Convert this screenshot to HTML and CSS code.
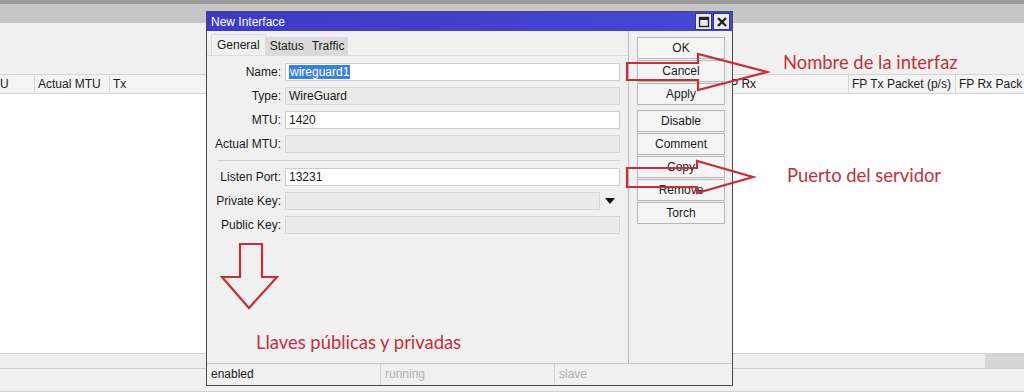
FILE: index.html
```html
<!DOCTYPE html>
<html lang="es">
<head>
  <meta charset="UTF-8" />
  <title>New Interface</title>
  <link rel="stylesheet" href="styles.css">
</head>
<body>
  <div class="app">
    <div class="topline"></div>
    <div class="toolbar"></div>
    <div class="filter"></div>
    <div class="thead">
      <div class="th c1">U</div>
      <div class="th c2">Actual MTU</div>
      <div class="th c3">Tx</div>
      <div class="th c4">FP Rx</div>
      <div class="th c5">FP Tx Packet (p/s)</div>
      <div class="th c6">FP Rx Pack</div>
    </div>
    <div class="tbody"></div>
    <div class="hscroll"><div class="thumb"></div></div>
    <div class="statusbar"></div>
  </div>

  <div class="dialog">
    <div class="titlebar">
      <span class="title">New Interface</span>
      <div class="winbtns">
        <span class="winbtn"><svg width="12" height="12" viewBox="0 0 12 12"><rect x="1.5" y="1.5" width="9" height="9" fill="none" stroke="#222" stroke-width="1.4"/><line x1="1.5" y1="3" x2="10.5" y2="3" stroke="#222" stroke-width="2"/></svg></span>
        <span class="winbtn"><svg width="12" height="12" viewBox="0 0 12 12"><path d="M2 2 L10 10 M10 2 L2 10" stroke="#222" stroke-width="2.4"/></svg></span>
      </div>
    </div>
    <div class="body">
      <div class="left">
        <div class="tabs">
          <span class="tab active">General</span>
          <span class="tab">Status</span>
          <span class="tab">Traffic</span>
        </div>
        <div class="panel">
          <div class="form">
            <label>Name:</label>
            <div class="field"><span class="sel">wireguard1</span></div>
            <label>Type:</label>
            <div class="field off">WireGuard</div>
            <label>MTU:</label>
            <div class="field">1420</div>
            <label>Actual MTU:</label>
            <div class="field off"></div>
            <div class="sep"></div>
            <label>Listen Port:</label>
            <div class="field">13231</div>
            <label>Private Key:</label>
            <div class="combo">
              <div class="field off"></div>
              <span class="drop"></span>
            </div>
            <label>Public Key:</label>
            <div class="field off"></div>
          </div>
        </div>
      </div>
      <div class="actions">
        <div class="group">
          <button>OK</button>
          <button>Cancel</button>
          <button>Apply</button>
        </div>
        <div class="group">
          <button>Disable</button>
          <button>Comment</button>
          <button>Copy</button>
          <button>Remove</button>
          <button>Torch</button>
        </div>
      </div>
    </div>
    <div class="dstatus">
      <span class="cell">enabled</span>
      <span class="cell dim">running</span>
      <span class="cell dim">slave</span>
    </div>
  </div>

  <!-- annotations drawn over the screenshot -->
  <svg class="marks" width="1024" height="392" viewBox="0 0 1024 392">
    <polygon points="627,63 698,63 698,54 767,72 698,90 698,80 627,80" />
    <polygon points="627,168 697,168 697,161 753,177 697,193 697,187 627,187" />
    <polygon points="240,244 262,244 262,277 277,277 249,308 222,277 240,277" />
  </svg>
  <span class="note n1">Nombre de la interfaz</span>
  <span class="note n2">Puerto del servidor</span>
  <span class="note n3">Llaves públicas y privadas</span>
</body>
</html>
```

FILE: styles.css
```css
body {
  margin: 0;
  width: 1024px;
  height: 392px;
  overflow: hidden;
  position: relative;
  font-family: 'Liberation Sans', Arial, sans-serif;
  font-size: 12px;
  color: #1a1a1a;
  background: #fff;
}
.app {
  display: flex;
  flex-direction: column;
  height: 392px;
}
.topline {
  height: 4px;
  background: #9c9c9c;
}
.toolbar {
  height: 19px;
  background: #c6c6c6;
}
.filter {
  height: 51px;
  background: #f0f0f0;
}
.thead {
  display: flex;
  height: 18px;
  background: #f3f3f3;
  border-top: 1px solid #d4d4d4;
  border-bottom: 1px solid #d4d4d4;
}
.th {
  box-sizing: border-box;
  padding-left: 3px;
  line-height: 18px;
  border-right: 1px solid #d8d8d8;
  white-space: nowrap;
  overflow: hidden;
}
.c1 { width: 35px; padding-left: 0; }
.c2 { width: 75px; }
.c3 { width: 610px; }
.c4 { width: 129px; }
.c5 { width: 107px; }
.c6 { flex: 1; border-right: none; }
.tbody {
  flex: 1;
  background: #fff;
}
.hscroll {
  display: flex;
  justify-content: flex-end;
  height: 14px;
  background: #eeeeee;
  border-top: 1px solid #cfcfcf;
  border-bottom: 1px solid #cfcfcf;
}
.hscroll .thumb {
  width: 39px;
  background: #d6d6d6;
}
.statusbar {
  height: 22px;
  background: #f0f0f0;
  border-bottom: 1px solid #d0d0d0;
}

/* dialog window */
.dialog {
  position: absolute;
  left: 206px;
  top: 11px;
  width: 525px;
  height: 373px;
  border: 1px solid #4a4a4a;
  background: #f0f0f0;
  display: flex;
  flex-direction: column;
}
.titlebar {
  display: flex;
  align-items: center;
  justify-content: space-between;
  height: 19px;
  padding: 0 2px 0 4px;
  background: linear-gradient(to right, #3b3bc6, #4747d6);
  color: #fff;
}
.title {
  font-size: 12px;
}
.winbtns {
  display: flex;
  gap: 1px;
}
.winbtn {
  display: flex;
  align-items: center;
  justify-content: center;
  width: 15px;
  height: 15px;
  background: #ececec;
  border: 1px solid #3030a0;
}
.body {
  flex: 1;
  display: flex;
}
.left {
  width: 421px;
  display: flex;
  flex-direction: column;
  border-right: 1px solid #bdbdbd;
}
.tabs {
  display: flex;
  align-items: flex-end;
  height: 24px;
  padding-left: 4px;
}
.tab {
  height: 18px;
  line-height: 18px;
  padding: 0 4px;
  background: #dadada;
}
.tab.active {
  height: 20px;
  line-height: 20px;
  padding: 0 5px 0 5px;
  background: #f0f0f0;
  border: 1px solid #dcdcdc;
  border-bottom: none;
}
.panel {
  flex: 1;
  border-top: 1px solid #dcdcdc;
}
.form {
  display: grid;
  grid-template-columns: 70px 335px;
  column-gap: 4px;
  row-gap: 6px;
  padding: 7px 0 0 4px;
}
.form label {
  text-align: right;
  line-height: 18px;
}
.field {
  box-sizing: border-box;
  height: 18px;
  line-height: 16px;
  padding-left: 3px;
  background: #fff;
  border: 1px solid #cdcdcd;
}
.field.off {
  background: #ebebeb;
  border-color: #d6d6d6;
}
.sel {
  background: #3a7fd8;
  color: #fff;
  padding: 0 1px;
}
.sep {
  grid-column: 1 / 3;
  height: 1px;
  margin: 1px 0 1px 6px;
  background: #cfcfcf;
}
.combo {
  display: flex;
  align-items: center;
}
.combo .field {
  flex: 1;
}
.drop {
  width: 0;
  height: 0;
  margin: 0 5px 0 5px;
  border-left: 5px solid transparent;
  border-right: 5px solid transparent;
  border-top: 6px solid #111;
}
.actions {
  flex: 1;
  display: flex;
  flex-direction: column;
  gap: 5px;
  padding: 6px 0 0 8px;
}
.group {
  display: flex;
  flex-direction: column;
  gap: 1px;
}
.actions button {
  width: 88px;
  height: 22px;
  padding: 0;
  font-family: inherit;
  font-size: 12px;
  color: #1a1a1a;
  background: #f5f5f5;
  border: 1px solid #b6b6b6;
}
.dstatus {
  display: flex;
  height: 21px;
  border-top: 1px solid #c8c8c8;
}
.cell {
  box-sizing: border-box;
  width: 174px;
  line-height: 21px;
  padding-left: 4px;
  border-right: 1px solid #d2d2d2;
}
.cell:last-child {
  flex: 1;
  border-right: none;
}
.cell.dim {
  color: #b0b0b0;
}

/* red annotations */
.marks {
  position: absolute;
  left: 0;
  top: 0;
}
.marks polygon {
  fill: none;
  stroke: #c2303c;
  stroke-width: 2.2;
}
.note {
  position: absolute;
  font-family: Lato, 'Open Sans', sans-serif;
  font-size: 18.4px;
  line-height: 20px;
  color: #c2303c;
  white-space: nowrap;
}
.n1 { left: 783px; top: 52px; }
.n2 { left: 787px; top: 165px; }
.n3 { left: 256px; top: 332px; }
```
